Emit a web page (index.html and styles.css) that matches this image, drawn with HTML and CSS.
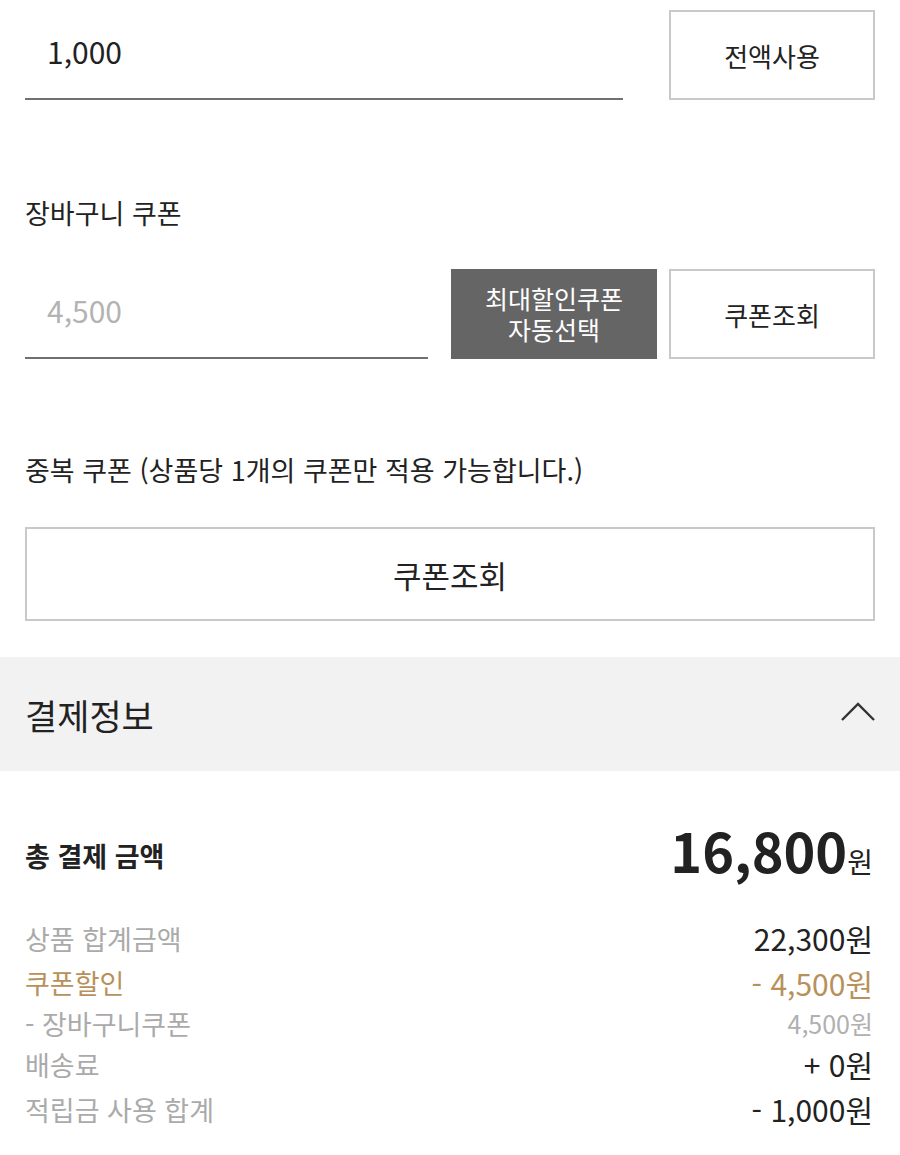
FILE: index.html
```html
<!DOCTYPE html>
<html lang="ko">

<head>
    <meta charset="UTF-8">
    <meta name="viewport" content="width=device-width, initial-scale=1.0">
    <title>결제정보</title>
    <link rel="stylesheet" href="styles.css">
</head>

<body>
    <div class="discount">
        <!-- 적립금 -->
        <div class="row">
            <input type="text" class="field" value="1,000">
            <button class="btn">전액사용</button>
        </div>

        <p class="label first">장바구니 쿠폰</p>
        <div class="row">
            <input type="text" class="field short" placeholder="4,500">
            <button class="btn dark">최대할인쿠폰<br>자동선택</button>
            <button class="btn">쿠폰조회</button>
        </div>

        <p class="label">중복 쿠폰 (상품당 1개의 쿠폰만 적용 가능합니다.)</p>
        <button class="btn wide">쿠폰조회</button>
    </div>

    <div class="pay">
        <div class="pay-head">
            <h2>결제정보</h2>
            <svg class="arrow" width="34" height="20" viewBox="0 0 34 20">
                <polyline points="1,18 17,2 33,18" fill="none" stroke="#333" stroke-width="2.4" />
            </svg>
        </div>
        <div class="pay-body">
            <div class="total">
                <span class="total-title">총 결제 금액</span>
                <span class="total-price">16,800<em>원</em></span>
            </div>
            <ul class="detail">
                <li><span>상품 합계금액</span><span class="num">22,300원</span></li>
                <li class="coupon"><span>쿠폰할인</span><span class="num">- 4,500원</span></li>
                <li class="sub"><span>- 장바구니쿠폰</span><span class="num">4,500원</span></li>
                <li><span>배송료</span><span class="num">+ 0원</span></li>
                <li><span>적립금 사용 합계</span><span class="num">- 1,000원</span></li>
            </ul>
        </div>
    </div>
</body>

</html>
```

FILE: styles.css
```css
* {
    padding: 0;
    margin: 0;
    box-sizing: border-box;
}

body {
    background-color: #fff;
    color: #222;
    font-family: "Noto Sans CJK KR", "Noto Sans", sans-serif;
}

.discount {
    padding: 10px 25px 36px;
}

.row {
    display: flex;
    align-items: flex-end;
}

.field {
    width: 598px;
    height: 90px;
    margin-right: 46px;
    padding: 0 22px 6px;
    border: none;
    border-bottom: 2px solid #707070;
    outline: none;
    font-family: inherit;
    font-size: 30px;
    color: #222;
    background: transparent;
}

.field.short {
    width: 403px;
    margin-right: 23px;
}

.field::placeholder {
    color: #b3b3b3;
}

.btn {
    width: 206px;
    height: 90px;
    border: 2px solid #c9c9c9;
    background-color: #fff;
    font-family: inherit;
    font-size: 26px;
    color: #222;
    cursor: pointer;
}

.btn.dark {
    margin-right: 12px;
    border-color: #656565;
    background-color: #656565;
    color: #fff;
    font-size: 25px;
    line-height: 31px;
}

.btn.wide {
    display: block;
    width: 100%;
    height: 94px;
    font-size: 31px;
}

.label {
    font-size: 27px;
    line-height: 36px;
    margin: 93px 0 38px;
}

.label.first {
    margin-top: 95px;
}

.label + .btn {
    margin-top: 39px;
}

.pay-head {
    display: flex;
    justify-content: space-between;
    align-items: center;
    height: 114px;
    padding: 0 25px;
    background-color: #f2f2f2;
}

.pay-head h2 {
    font-size: 35px;
    font-weight: 400;
}

.arrow {
    margin-top: -4px;
}

.pay-body {
    padding: 49px 27px 20px 25px;
}

.total {
    display: flex;
    justify-content: space-between;
    align-items: center;
    height: 70px;
    margin-bottom: 26px;
}

.total-title {
    font-size: 27px;
    font-weight: 700;
}

.total-price {
    font-size: 54px;
    font-weight: 700;
    line-height: 70px;
}

.total-price em {
    font-style: normal;
    font-size: 28px;
    font-weight: 400;
}

.detail {
    list-style: none;
}

.detail li {
    display: flex;
    justify-content: space-between;
    font-size: 27px;
    line-height: 45px;
    color: #aaa;
}

.detail .num {
    font-size: 30px;
    color: #222;
}

.detail .coupon {
    line-height: 44px;
}

.detail .coupon,
.detail .coupon .num {
    color: #b8915a;
}

.detail .sub {
    line-height: 37px;
}

.detail .sub .num {
    font-size: 25px;
    color: #b0b0b0;
}
```
